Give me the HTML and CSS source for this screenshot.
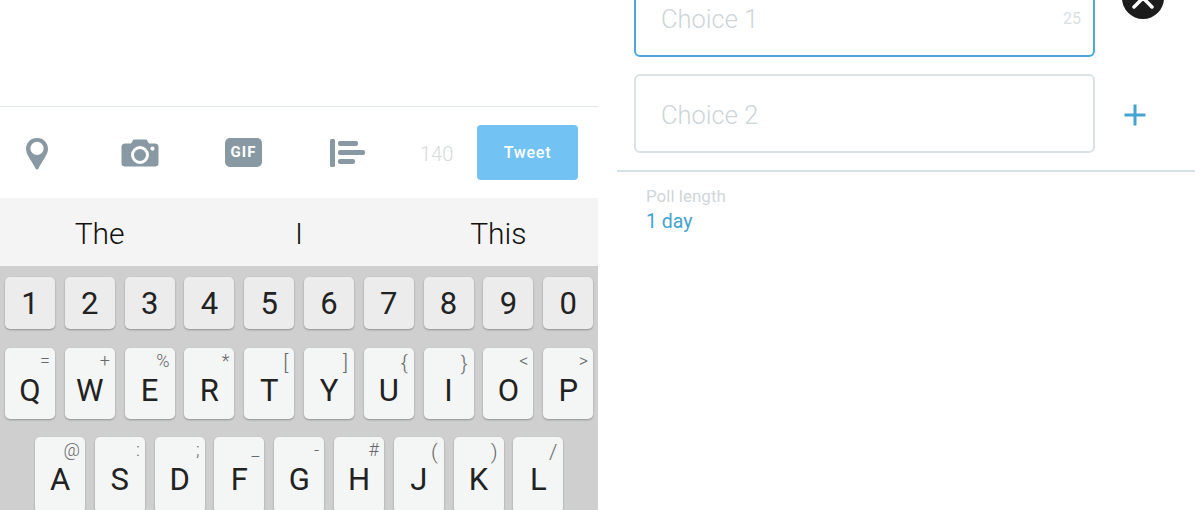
FILE: index.html
```html
<!DOCTYPE html>
<html lang="en">
<head>
  <meta charset="UTF-8">
  <meta name="viewport" content="width=device-width, initial-scale=1.0">
  <title>Poll Tweet</title>
  <link rel="stylesheet" href="styles.css">
</head>
<body>
  <div class="compose">
    <div class="compose-space"></div>
    <div class="toolbar">
      <svg class="tool tool-pin" width="24" height="34" viewBox="0 0 24 34">
        <path fill-rule="evenodd" fill="#8899a3" d="M12 1C5.600 1 1 5.800 1 11.800c0 6.200 5.500 11.400 9.500 19.700.7 1.400 2.300 1.400 3 0C17.500 23.200 23 18 23 11.800 23 5.800 18.400 1 12 1zM12 4.800a6.600 6.600 0 1 1 0 13.200 6.600 6.600 0 0 1 0-13.200z"/>
      </svg>
      <svg class="tool tool-camera" width="38" height="30" viewBox="0 0 38 30">
        <path fill-rule="evenodd" fill="#8899a3" d="M12.500 1.500h13l2.500 4H34a3.500 3.500 0 0 1 3.500 3.500v16a3.500 3.500 0 0 1-3.500 3.500H4A3.500 3.500 0 0 1 .5 25V9A3.500 3.500 0 0 1 4 5.500h6zM19 8a9 9 0 1 0 0 18 9 9 0 0 0 0-18zM19 11a6 6 0 1 1 0 12 6 6 0 0 1 0-12zM31.500 8.500a2.100 2.100 0 1 0 0 4.200 2.100 2.100 0 0 0 0-4.200z"/>
      </svg>
      <div class="tool gif-icon">GIF</div>
      <svg class="tool tool-poll" width="36" height="30" viewBox="0 0 36 30">
        <rect x="1" y="1" width="5" height="28" rx="1.500" fill="#8899a3"/>
        <rect x="9" y="3" width="20" height="5" rx="2" fill="#8899a3"/>
        <rect x="9" y="12" width="27" height="5" rx="2" fill="#8899a3"/>
        <rect x="9" y="21" width="17" height="5" rx="2" fill="#8899a3"/>
      </svg>
      <span class="count">140</span>
      <button class="tweet-btn">Tweet</button>
    </div>
    <div class="suggestions">
      <span class="word word-left">The</span>
      <span class="word word-mid">I</span>
      <span class="word word-right">This</span>
    </div>
    <div class="keyboard">
      <div class="key-row row-digits">
        <div class="key">1</div>
        <div class="key">2</div>
        <div class="key">3</div>
        <div class="key">4</div>
        <div class="key">5</div>
        <div class="key">6</div>
        <div class="key">7</div>
        <div class="key">8</div>
        <div class="key">9</div>
        <div class="key">0</div>
      </div>
      <div class="key-row row-top">
        <div class="key">Q<span class="hint">=</span></div>
        <div class="key">W<span class="hint">+</span></div>
        <div class="key">E<span class="hint">%</span></div>
        <div class="key">R<span class="hint">*</span></div>
        <div class="key">T<span class="hint hint-tall">[</span></div>
        <div class="key">Y<span class="hint hint-tall">]</span></div>
        <div class="key">U<span class="hint hint-tall">{</span></div>
        <div class="key">I<span class="hint hint-tall">}</span></div>
        <div class="key">O<span class="hint">&lt;</span></div>
        <div class="key">P<span class="hint">&gt;</span></div>
      </div>
      <div class="key-row row-home">
        <div class="key">A<span class="hint">@</span></div>
        <div class="key">S<span class="hint">:</span></div>
        <div class="key">D<span class="hint">;</span></div>
        <div class="key">F<span class="hint">_</span></div>
        <div class="key">G<span class="hint">-</span></div>
        <div class="key">H<span class="hint">#</span></div>
        <div class="key">J<span class="hint hint-tall">(</span></div>
        <div class="key">K<span class="hint hint-tall">)</span></div>
        <div class="key">L<span class="hint hint-tall">/</span></div>
      </div>
    </div>
  </div>

  <div class="poll">
    <div class="choice-row">
      <div class="choice choice-active">
        <span>Choice 1</span>
        <span class="choice-count">25</span>
      </div>
      <div class="close-btn">
        <svg width="24" height="24" viewBox="0 0 24 24">
          <path d="M3 3l18 18M21 3L3 21" stroke="#fff" stroke-width="3.500" stroke-linecap="round"/>
        </svg>
      </div>
    </div>
    <div class="choice-row">
      <div class="choice">
        <span>Choice 2</span>
      </div>
      <svg class="add-btn" width="24" height="24" viewBox="0 0 24 24">
        <path d="M12 1.500v21M1.500 12h21" stroke="#45a3d1" stroke-width="3"/>
      </svg>
    </div>
    <div class="poll-length">
      <div class="poll-label">Poll length</div>
      <div class="poll-value">1 day</div>
    </div>
  </div>
</body>
</html>
```

FILE: styles.css
```css
html, body {
  height: 510px;
  overflow: hidden;
}

body {
  margin: 0;
  display: flex;
  background-color: #ffffff;
  font-family: Roboto, "Liberation Sans", sans-serif;
}

.compose {
  width: 598px;
  flex-shrink: 0;
}

.compose-space {
  height: 106px;
  border-bottom: 1px solid #dfe5e7;
}

.toolbar {
  height: 91px;
  position: relative;
}

/* icons sit at fixed spots along the bar */
.tool {
  position: absolute;
}

.tool-pin {
  left: 25px;
  top: 30px;
}

.tool-camera {
  left: 121px;
  top: 31px;
}

.gif-icon {
  left: 225px;
  top: 31px;
  width: 37px;
  height: 29px;
  border-radius: 5px;
  background-color: #8899a3;
  color: #ffffff;
  font-size: 15px;
  font-weight: 700;
  letter-spacing: 1px;
  line-height: 29px;
  text-align: center;
}

.tool-poll {
  left: 329px;
  top: 31px;
}

.count {
  position: absolute;
  left: 420px;
  top: 35px;
  font-size: 20px;
  font-weight: 300;
  color: #d5dadd;
}

.tweet-btn {
  position: absolute;
  left: 477px;
  top: 18px;
  width: 101px;
  height: 55px;
  padding: 0;
  border: none;
  border-radius: 4px;
  background-color: #72c3f3;
  color: #ffffff;
  font-family: inherit;
  font-size: 16px;
  font-weight: 500;
  letter-spacing: 0.8px;
}

.suggestions {
  height: 68px;
  box-sizing: border-box;
  padding-top: 2px;
  background-color: #f4f4f4;
  display: flex;
  align-items: center;
  font-size: 30px;
  font-weight: 300;
  color: #111111;
}

.word {
  flex: 1;
  text-align: center;
}

.keyboard {
  height: 244px;
  background-color: #cfcfcf;
  overflow: hidden;
  padding-top: 11px;
  box-sizing: border-box;
}

.key-row {
  display: flex;
  gap: 9.800px;
  padding-left: 5px;
}

.key {
  width: 50px;
  flex-shrink: 0;
  position: relative;
  box-sizing: border-box;
  border-radius: 5px;
  background-color: #f4f5f5;
  box-shadow: 0 1px 2px rgba(0, 0, 0, 0.3);
  color: #222222;
  font-size: 31px;
  text-align: center;
}

.row-digits .key {
  height: 52px;
  line-height: 54px;
  background-color: #ececec;
}

.row-top {
  margin-top: 19px;
}

.row-top .key {
  height: 71px;
  padding-top: 24px;
  line-height: 37px;
}

.row-home {
  margin-top: 18px;
  padding-left: 35px;
}

.row-home .key {
  height: 76px;
  padding-top: 24px;
  line-height: 37px;
}

.hint {
  position: absolute;
  top: 3px;
  right: 5px;
  font-size: 18px;
  line-height: 20px;
  color: #666a6d;
  font-weight: 300;
}

.hint-tall {
  font-size: 21px;
  line-height: 24px;
  right: 6px;
}

.poll {
  width: 597px;
  box-sizing: border-box;
  margin-top: -22px;
  padding-left: 36px;
}

.choice-row {
  display: flex;
  align-items: center;
  margin-bottom: 17px;
  position: relative;
}

.choice {
  width: 461px;
  height: 79px;
  box-sizing: border-box;
  border: 2px solid #dae2e5;
  border-radius: 6px;
  padding: 2px 12px 0 25px;
  display: flex;
  align-items: center;
  justify-content: space-between;
  color: #ced4d8;
  font-size: 25.500px;
  font-weight: 300;
}

.choice-active {
  border-color: #4aa8d8;
}

.choice-count {
  font-size: 16px;
  font-weight: 400;
  color: #dadfe2;
}

.close-btn {
  position: absolute;
  left: 488px;
  top: -1px;
  width: 42px;
  height: 42px;
  border-radius: 50%;
  background-color: #1c1c1c;
  display: flex;
  align-items: center;
  justify-content: center;
}

.add-btn {
  margin-left: 28px;
  margin-top: 2px;
}

.poll-length {
  margin-left: -17px;
  width: 558px;
  border-top: 2px solid #d5dee2;
  padding: 14px 0 0 29px;
}

.poll-label {
  font-size: 17px;
  line-height: 20px;
  color: #d0d6da;
}

.poll-value {
  margin-top: 4px;
  font-size: 19.500px;
  line-height: 23px;
  color: #45a3d1;
}
```
